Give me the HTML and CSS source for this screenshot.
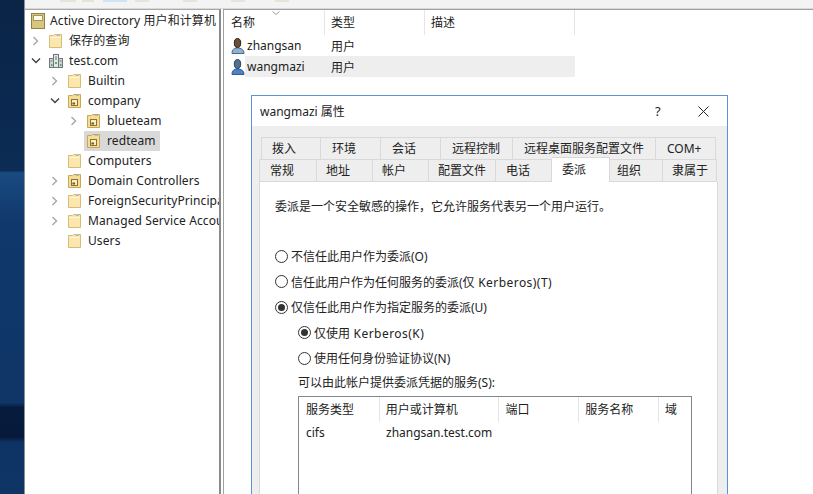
FILE: index.html
```html
<!DOCTYPE html>
<html lang="zh">
<head>
<meta charset="utf-8">
<title>Active Directory</title>
<link rel="stylesheet" href="styles.css">
</head>
<body>
<svg class="defs" width="0" height="0">
  <defs>
    <symbol id="folder" viewBox="0 0 16 16">
      <path d="M1.500 14.500V2.500h4l1-1h7v13z" fill="#fbe7ad" stroke="#d8bb74"/>
      <path d="M2.500 4.500h10" stroke="#fff6d8"/>
      <path d="M8.500 2.500h3.500" stroke="#9dbfe0"/>
    </symbol>
    <symbol id="ou" viewBox="0 0 16 16">
      <path d="M1.500 14.500V2.500h4l1-1h7v13z" fill="#f6dd97" stroke="#c9a659"/>
      <path d="M8.500 2.500h3.500" stroke="#9dbfe0"/>
      <rect x="4.500" y="6.500" width="6" height="6" fill="#fbeebf" stroke="#8a7330"/>
      <rect x="5.500" y="9.500" width="2.500" height="2" fill="#6c5a22"/>
    </symbol>
    <symbol id="chev-r" viewBox="0 0 8 10">
      <path d="M1.500 1l4 4-4 4" fill="none" stroke="#a6a6a6" stroke-width="1.400"/>
    </symbol>
    <symbol id="chev-d" viewBox="0 0 10 8">
      <path d="M1 1.500l4 4 4-4" fill="none" stroke="#404040" stroke-width="1.400"/>
    </symbol>
    <symbol id="user" viewBox="0 0 14 16">
      <path d="M1 15.500c0-4 2-5.500 5.500-5.500s6.500 1.500 6.500 5.500z" fill="#8fb2d4" stroke="#4a6a8a"/>
      <ellipse cx="6.500" cy="5" rx="3.200" ry="4.500" fill="#6b5036" stroke="#2e2418"/>
    </symbol>
    <symbol id="user-off" viewBox="0 0 14 16">
      <path d="M1 15.500c0-4 2-5.500 5.500-5.500s6.500 1.500 6.500 5.500z" fill="#4d82c4" stroke="#2c5c9c"/>
      <ellipse cx="6.500" cy="5" rx="3.200" ry="4.500" fill="#54708f" stroke="#2a4468"/>
    </symbol>
  </defs>
</svg>

<div class="screen">
  <div class="desktop"></div>
  <div class="app">
    <div class="toolbar">
      <span class="tool t-a"></span>
      <span class="tool t-b"></span>
      <span class="tool t-hot"></span>
      <span class="tool t-c"></span>
      <span class="tool t-d"></span>
      <span class="tool t-e"></span>
      <span class="tool t-f"></span>
    </div>
    <div class="panes">
      <nav class="tree">
        <div class="node lv0">
          <svg class="root-ico" viewBox="0 0 14 16"><rect x="0.500" y="0.500" width="13" height="15" fill="#d9c67e" stroke="#8f8446"/><rect x="2.500" y="2.500" width="9" height="5" fill="#fffbe6" stroke="#a39758"/></svg>
          <span class="label">Active Directory 用户和计算机</span>
        </div>
        <div class="node lv1">
          <svg class="twist-ico"><use href="#chev-r"/></svg>
          <svg class="ico"><use href="#folder"/></svg>
          <span class="label">保存的查询</span>
        </div>
        <div class="node lv1">
          <svg class="twist-ico-d"><use href="#chev-d"/></svg>
          <svg class="ico" viewBox="0 0 16 16">
            <rect x="5.500" y="1.500" width="5" height="13" fill="#e4e7e9" stroke="#6f777d"/>
            <rect x="1.500" y="5.500" width="4" height="9" fill="#cfd4d8" stroke="#6f777d"/>
            <rect x="10.500" y="5.500" width="4" height="9" fill="#cfd4d8" stroke="#6f777d"/>
            <path d="M7 4h2M7 6h2M2.500 8h2M11.500 8h2" stroke="#6f777d"/>
            <rect x="7" y="9" width="2" height="2" fill="#52b04f"/>
            <rect x="3" y="11" width="1.500" height="2" fill="#52b04f"/>
            <rect x="12" y="11" width="1.500" height="2" fill="#52b04f"/>
          </svg>
          <span class="label">test.com</span>
        </div>
        <div class="node lv2">
          <svg class="twist-ico"><use href="#chev-r"/></svg>
          <svg class="ico"><use href="#folder"/></svg>
          <span class="label">Builtin</span>
        </div>
        <div class="node lv2">
          <svg class="twist-ico-d"><use href="#chev-d"/></svg>
          <svg class="ico"><use href="#ou"/></svg>
          <span class="label">company</span>
        </div>
        <div class="node lv3">
          <svg class="twist-ico"><use href="#chev-r"/></svg>
          <svg class="ico"><use href="#ou"/></svg>
          <span class="label">blueteam</span>
        </div>
        <div class="node lv3">
          <span class="twist"></span>
          <span class="sel-box">
            <svg class="sel-ico"><use href="#ou"/></svg>
            <span class="label">redteam</span>
          </span>
        </div>
        <div class="node lv2">
          <span class="twist"></span>
          <svg class="ico"><use href="#folder"/></svg>
          <span class="label">Computers</span>
        </div>
        <div class="node lv2">
          <svg class="twist-ico"><use href="#chev-r"/></svg>
          <svg class="ico"><use href="#ou"/></svg>
          <span class="label">Domain Controllers</span>
        </div>
        <div class="node lv2">
          <svg class="twist-ico"><use href="#chev-r"/></svg>
          <svg class="ico"><use href="#folder"/></svg>
          <span class="label">ForeignSecurityPrincipals</span>
        </div>
        <div class="node lv2">
          <svg class="twist-ico"><use href="#chev-r"/></svg>
          <svg class="ico"><use href="#folder"/></svg>
          <span class="label">Managed Service Accounts</span>
        </div>
        <div class="node lv2">
          <span class="twist"></span>
          <svg class="ico"><use href="#folder"/></svg>
          <span class="label">Users</span>
        </div>
      </nav>
      <main class="list">
        <div class="list-head">
          <svg class="sort" viewBox="0 0 8 4"><path d="M0.500 0.500L4 3.500l3.500-3" fill="none" stroke="#a0a0a0"/></svg>
          <span class="col col-name">名称</span>
          <span class="col col-type">类型</span>
          <span class="col col-desc">描述</span>
        </div>
        <div class="row">
          <svg class="row-ico"><use href="#user"/></svg>
          <span class="row-name">zhangsan</span>
          <span class="row-type">用户</span>
        </div>
        <div class="row row-sel">
          <svg class="row-ico"><use href="#user-off"/></svg>
          <span class="row-name">wangmazi</span>
          <span class="row-type">用户</span>
        </div>
      </main>
    </div>
  </div>

  <section class="dialog">
    <header class="titlebar">
      <span class="title">wangmazi 属性</span>
      <span class="help">?</span>
      <svg class="close" viewBox="0 0 11 11"><path d="M0.500 0.500l10 10M10.500 0.500l-10 10" stroke="#222" fill="none"/></svg>
    </header>
    <div class="dlg-body">
      <div class="tabs tabs-back">
        <span class="tab t1">拨入</span>
        <span class="tab t2">环境</span>
        <span class="tab t3">会话</span>
        <span class="tab t4">远程控制</span>
        <span class="tab t5">远程桌面服务配置文件</span>
        <span class="tab t6">COM+</span>
      </div>
      <div class="tabs tabs-front">
        <span class="tab f1">常规</span>
        <span class="tab f2">地址</span>
        <span class="tab f3">帐户</span>
        <span class="tab f4">配置文件</span>
        <span class="tab f5">电话</span>
        <span class="tab f6 active">委派</span>
        <span class="tab f7">组织</span>
        <span class="tab f8">隶属于</span>
      </div>
      <div class="panel">
        <p class="intro">委派是一个安全敏感的操作，它允许服务代表另一个用户运行。</p>
        <div class="radio r-first"><span class="dot"></span><span>不信任此用户作为委派(O)</span></div>
        <div class="radio"><span class="dot"></span><span>信任此用户作为任何服务的委派(仅<span class="latin"> Kerberos)(T)</span></span></div>
        <div class="radio"><span class="dot on"></span><span>仅信任此用户作为指定服务的委派(U)</span></div>
        <div class="radio sub"><span class="dot on"></span><span>仅使用<span class="latin"> Kerberos(K)</span></span></div>
        <div class="radio sub"><span class="dot"></span><span>使用任何身份验证协议(N)</span></div>
        <div class="svc-label">可以由此帐户提供委派凭据的服务(S):</div>
        <div class="svc">
          <div class="svc-head">
            <span class="h1">服务类型</span>
            <span class="h2">用户或计算机</span>
            <span class="h3">端口</span>
            <span class="h4">服务名称</span>
            <span class="h5">域</span>
          </div>
          <div class="svc-row">
            <span class="c1">cifs</span>
            <span class="c2">zhangsan.test.com</span>
          </div>
        </div>
      </div>
    </div>
  </section>
</div>
</body>
</html>
```

FILE: styles.css
```css
* { box-sizing: border-box; }
html, body { margin: 0; padding: 0; }
body {
  width: 813px;
  height: 494px;
  overflow: hidden;
  font-family: "Noto Sans", "Noto Sans CJK SC", sans-serif;
  font-size: 12px;
  color: #222;
}
.defs { position: absolute; }
.screen {
  position: relative;
  width: 813px;
  height: 494px;
  display: flex;
  overflow: hidden;
  background: #fff;
}
.desktop {
  width: 24px;
  flex: none;
  background: linear-gradient(180deg, #0a2446 0, #0c2c55 34.5%, #194a80 35%, #10386c 45%, #0f3666 81.5%, #071c3c 82.500%, #06193a 88.500%, #0d3364 89.500%, #0e3566 100%);
}
.app {
  flex: 1;
  display: flex;
  flex-direction: column;
  border-left: 1px solid #8a9099;
}
.toolbar {
  height: 9px;
  flex: none;
  display: flex;
  align-items: flex-start;
  background: #f3f3f3;
  border-bottom: 1px solid #d8d8d8;
}
.tool { display: block; height: 2px; background: #e6e3d8; }
.t-a { width: 16px; margin-left: 35px; }
.t-b { width: 12px; margin-left: 6px; }
.t-hot { width: 24px; margin-left: 9px; background: #cfe3f7; }
.t-c { width: 14px; margin-left: 8px; }
.t-d { width: 14px; margin-left: 34px; }
.t-e { width: 14px; margin-left: 34px; }
.t-f { width: 14px; margin-left: 30px; }
.panes { flex: 1; display: flex; min-height: 0; }

.tree {
  width: 196px;
  flex: none;
  padding-top: 1px;
  background: #fff;
  border-top: 1px solid #a8a8a8;
  border-right: 2px solid #8a8a8a;
  overflow: hidden;
}
.node {
  height: 20px;
  display: flex;
  align-items: center;
  white-space: nowrap;
}
.lv0 { padding-left: 6px; }
.lv1 { padding-left: 7px; }
.lv2 { padding-left: 26px; }
.lv3 { padding-left: 45px; }
.twist { width: 8px; flex: none; }
.twist-ico { width: 8px; height: 10px; flex: none; }
.twist-ico-d { width: 10px; height: 8px; flex: none; margin-left: -1px; margin-right: -1px; }
.ico { width: 16px; height: 16px; flex: none; margin-left: 8px; margin-right: 5px; }
.root-ico { width: 14px; height: 16px; flex: none; margin-right: 5px; }
.label { line-height: 20px; letter-spacing: 0.1px; }
.sel-box {
  display: flex;
  align-items: center;
  width: 76px;
  height: 20px;
  margin-left: 6px;
  padding-left: 2px;
  background: #d9d9d9;
}
.sel-ico { width: 16px; height: 16px; flex: none; margin-right: 5px; }

.list {
  flex: 1;
  margin-left: 2px;
  background: #fff;
  border-left: 1px solid #a0a0a0;
  border-top: 1px solid #a0a0a0;
  min-width: 0;
}
.list-head {
  position: relative;
  height: 25px;
  display: flex;
  width: 351px;
  line-height: 26px;
}
.sort { position: absolute; left: 48px; top: 1px; width: 8px; height: 4px; }
.col { display: block; padding-left: 7px; border-right: 1px solid #e5e5e5; }
.col-name { width: 101px; }
.col-type { width: 100px; padding-left: 6px; }
.col-desc { width: 150px; padding-left: 6px; }
.row {
  height: 21px;
  width: 351px;
  display: flex;
  align-items: center;
  position: relative;
  padding-left: 7px;
}
.row-ico { width: 14px; height: 16px; flex: none; margin-right: 2px; }
.row-name { width: 84px; }
.row-sel { background: linear-gradient(90deg, #fff 0, #fff 21px, #eeeeee 21px); }

.dialog {
  position: absolute;
  left: 251px;
  top: 95px;
  width: 477px;
  height: 399px;
  display: flex;
  flex-direction: column;
  border: 1px solid #5b94d6;
  border-bottom: 0;
  background: #eeeeee;
}
.titlebar {
  height: 30px;
  flex: none;
  background: #fff;
  display: flex;
  align-items: center;
  padding-left: 8px;
}
.title { flex: 1; }
.help { width: 10px; margin-right: 33px; font-size: 13px; }
.close { width: 11px; height: 11px; margin-right: 18px; }
.dlg-body {
  flex: 1;
  padding: 11px 0 0 7px;
  min-height: 0;
  display: flex;
  flex-direction: column;
}
.tabs { display: flex; flex: none; height: 23px; line-height: 21px; white-space: nowrap; }
.tabs-back { margin-left: 2px; }
.tabs-front { position: relative; z-index: 1; margin-top: -1px; }
.tab {
  display: block;
  padding-left: 11px;
  background: #eeeeee;
  border: 1px solid #d9d9d9;
  border-left: 0;
}
.tabs .tab:first-child { border-left: 1px solid #d9d9d9; }
.t1 { width: 60px; padding-left: 10px; }
.t2 { width: 60px; }
.t3 { width: 60px; }
.t4 { width: 72px; }
.t5 { width: 143px; }
.t6 { width: 60px; }
.f1 { width: 58px; padding-left: 10px; }
.f2 { width: 56px; padding-left: 9px; }
.f3 { width: 56px; padding-left: 9px; }
.f4 { width: 67px; padding-left: 9px; }
.f5 { width: 56px; padding-left: 10px; }
.f6 { width: 58px; padding-left: 10px; }
.f7 { width: 53px; padding-left: 7px; }
.f8 { width: 54px; padding-left: 9px; }
.active {
  background: #fff;
  height: 25px;
  margin-top: -2px;
  padding-top: 1px;
  border-bottom: 0;
  position: relative;
}
.panel {
  flex: 1;
  background: #fff;
  border-left: 1px solid #d9d9d9;
  border-right: 1px solid #d9d9d9;
  padding-left: 15px;
  width: 459px;
  min-height: 0;
}
.intro { margin: 15px 0 0; line-height: 20px; }
.radio {
  display: flex;
  align-items: center;
  height: 20px;
  margin-top: 5.6px;
  white-space: pre;
}
.r-first { margin-top: 29px; }
.latin { letter-spacing: 0.45px; }
.dot {
  width: 13px;
  height: 13px;
  flex: none;
  margin-right: 3px;
  border: 1px solid #333;
  border-radius: 50%;
  background: #fff;
  position: relative;
}
.dot.on::after {
  content: "";
  position: absolute;
  left: 2px;
  top: 2px;
  width: 7px;
  height: 7px;
  border-radius: 50%;
  background: #333;
}
.sub { margin-left: 23px; }
.svc-label { margin: 5px 0 0 23px; line-height: 20px; }
.svc {
  margin: 3px 0 0 23px;
  width: 394px;
  height: 110px;
  border: 1px solid #82878f;
  border-bottom: 0;
  background: #fff;
}
.svc-head { display: flex; height: 25px; line-height: 25px; }
.svc-head span { display: block; padding-left: 6px; border-right: 1px solid #e5e5e5; }
.svc-head .h1 { width: 81px; padding-left: 7px; }
.h2 { width: 120px; }
.h3 { width: 80px; }
.h4 { width: 80px; }
.svc-head .h5 { width: 32px; border-right: 0; }
.svc-row { display: flex; height: 22px; line-height: 22px; }
.c1 { width: 81px; padding-left: 7px; }
.c2 { width: 150px; padding-left: 6px; white-space: nowrap; }
```
